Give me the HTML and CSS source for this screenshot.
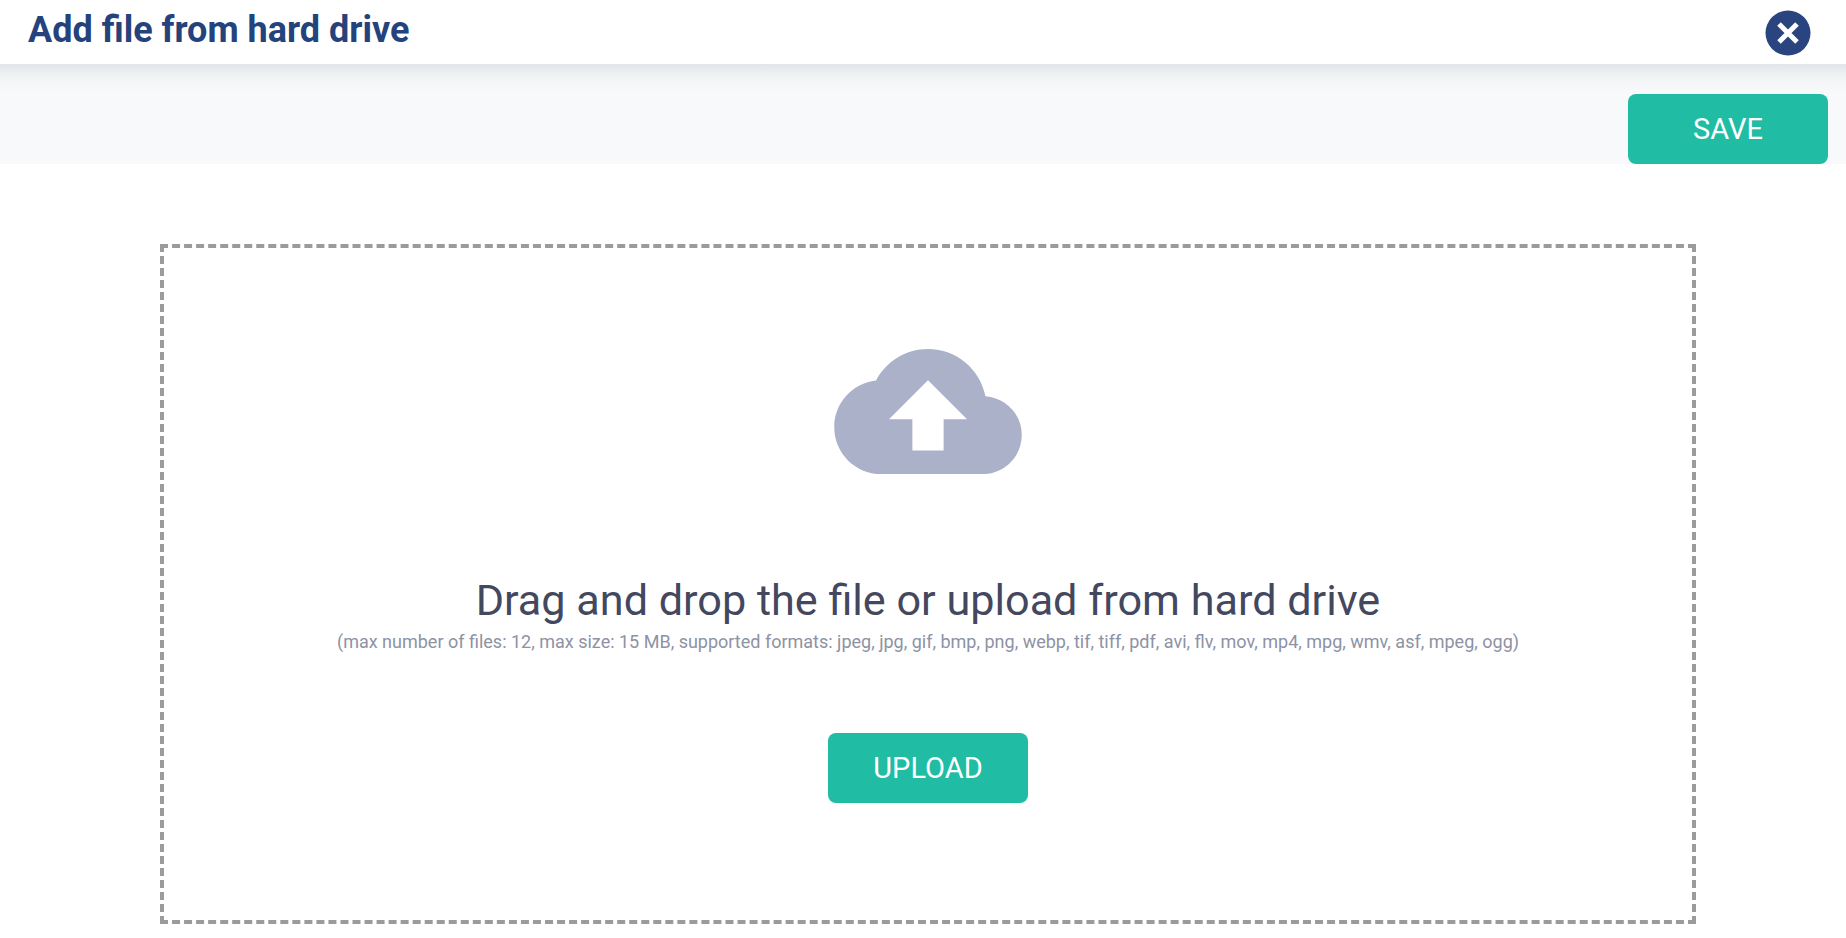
FILE: index.html
```html
<!DOCTYPE html>
<html lang="en">
<head>
    <meta charset="UTF-8">
    <meta name="viewport" content="width=device-width, initial-scale=1.0">
    <title>Add file from hard drive</title>
    <link rel="stylesheet" href="styles.css">
</head>
<body>
    <header class="modal-header">
        <h1>Add file from hard drive</h1>
        <button class="close-btn" type="button" aria-label="Close">
            <svg viewBox="0 0 46 46" width="46" height="46">
                <circle cx="23" cy="23" r="22.5" fill="#2a4480"/>
                <path d="M14 14L32 32M32 14L14 32" stroke="#fff" stroke-width="5" fill="none"/>
            </svg>
        </button>
    </header>

    <div class="toolbar">
        <button class="btn" type="button">SAVE</button>
    </div>

    <!-- Drop area -->
    <main class="drop-zone">
        <svg class="cloud-icon" viewBox="0 4 24 16" width="188" height="125">
            <path d="M19.35 10.04C18.67 6.59 15.64 4 12 4 9.11 4 6.6 5.64 5.35 8.04 2.34 8.36 0 10.91 0 14c0 3.31 2.69 6 6 6h13c2.76 0 5-2.24 5-5 0-2.64-2.05-4.78-4.65-4.96zM14 13v4h-4v-4H7l5-5 5 5h-3z" fill="#abb1c8"/>
        </svg>
        <h2>Drag and drop the file or upload from hard drive</h2>
        <p>(max number of files: 12, max size: 15 MB, supported formats: jpeg, jpg, gif, bmp, png, webp, tif, tiff, pdf, avi, flv, mov, mp4, mpg, wmv, asf, mpeg, ogg)</p>
        <button class="btn" type="button">UPLOAD</button>
    </main>
</body>
</html>
```

FILE: styles.css
```css
/* Global Reset */
* {
    margin: 0;
    padding: 0;
    box-sizing: border-box;
}

body {
    font-family: Roboto, Arial, sans-serif;
    background-color: #fff;
    height: 938px;
    overflow: hidden;
}

/* Header */
.modal-header {
    height: 64px;
    padding: 0 18px 0 28px;
    display: flex;
    align-items: center;
    justify-content: space-between;
    background-color: #fff;
}

.modal-header h1 {
    font-size: 36px;
    font-weight: 700;
    color: #24427c;
    margin-top: -4px;
}

.close-btn {
    width: 46px;
    height: 46px;
    margin: 2px 17px 0 0;
    border: none;
    background: none;
    cursor: pointer;
}

.close-btn svg {
    display: block;
}

/* Toolbar under the header */
.toolbar {
    height: 100px;
    padding: 30px 18px 0 0;
    display: flex;
    justify-content: flex-end;
    background: linear-gradient(#e2e6ea 0, #f3f4f6 14px, #f8f9fa 28px);
}

.btn {
    width: 200px;
    height: 70px;
    border: none;
    border-radius: 8px;
    background-color: #20bca4;
    color: #fff;
    font-family: inherit;
    font-size: 29px;
    cursor: pointer;
}

/* Drop Zone */
.drop-zone {
    width: 1536px;
    height: 680px;
    margin: 80px 0 0 160px;
    border: 4px dashed #9b9b9b;
    display: flex;
    flex-direction: column;
    align-items: center;
    text-align: center;
}

.cloud-icon {
    margin-top: 101px;
    display: block;
}

.drop-zone h2 {
    margin-top: 102px;
    font-size: 43.2px;
    font-weight: 400;
    line-height: 50px;
    color: #43485f;
}

.drop-zone p {
    margin-top: 4px;
    font-size: 18px;
    line-height: 24px;
    color: #8d92a5;
}

.drop-zone .btn {
    margin-top: 79px;
}
```
